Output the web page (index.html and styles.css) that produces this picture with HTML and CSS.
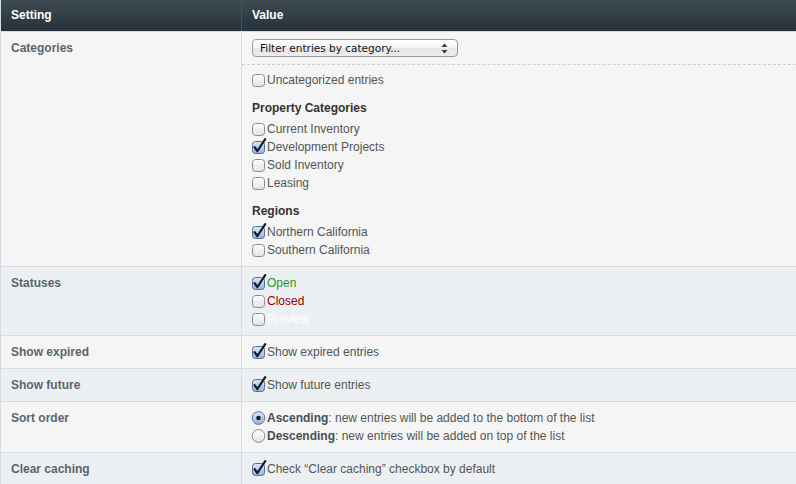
FILE: index.html
```html
<!DOCTYPE html>
<html lang="en">
<head>
  <meta charset="UTF-8" />
  <title>Entry list settings</title>
  <link rel="stylesheet" href="styles.css">
</head>
<body>

  <svg class="defs" width="0" height="0">
    <defs>
      <linearGradient id="g-off" x1="0" y1="0" x2="0" y2="1">
        <stop offset="0" stop-color="#ffffff"/>
        <stop offset="1" stop-color="#e2e2e2"/>
      </linearGradient>
      <linearGradient id="g-on" x1="0" y1="0" x2="0" y2="1">
        <stop offset="0" stop-color="#dbe8f8"/>
        <stop offset="1" stop-color="#8fb3e2"/>
      </linearGradient>
      <symbol id="cb-off" viewBox="0 0 15 18">
        <rect x="0.5" y="3.5" width="12" height="12" rx="3" fill="url(#g-off)" stroke="#8c8c8c"/>
      </symbol>
      <symbol id="cb-on" viewBox="0 0 15 18">
        <rect x="0.5" y="3.5" width="12" height="12" rx="3" fill="url(#g-on)" stroke="#5a6f8c"/>
        <path d="M2.6 9.2 L5.4 13 L13.2 1.2" fill="none" stroke="#111a2b" stroke-width="2.2" stroke-linecap="round" stroke-linejoin="round"/>
      </symbol>
      <symbol id="rd-on" viewBox="0 0 15 18">
        <circle cx="7" cy="9" r="6.4" fill="url(#g-on)" stroke="#6b7a8e"/>
        <circle cx="7" cy="9" r="2.3" fill="#1a1f2a"/>
      </symbol>
      <symbol id="rd-off" viewBox="0 0 15 18">
        <circle cx="7" cy="9" r="6.4" fill="url(#g-off)" stroke="#8c8c8c"/>
      </symbol>
    </defs>
  </svg>

  <div class="settings">

    <div class="row head">
      <div class="cell">Setting</div>
      <div class="cell value">Value</div>
    </div>

    <div class="row">
      <div class="cell label">Categories</div>
      <div class="cell value flush">
        <div class="filter">
          <div class="select">
            <span>Filter entries by category...</span>
            <svg width="7" height="11" viewBox="0 0 7 11"><path d="M3.5 0.5 L6.5 4 L0.5 4 Z M0.5 7 L6.5 7 L3.5 10.5 Z" fill="#3a3a3a"/></svg>
          </div>
        </div>
        <div class="cats">
          <label class="opt"><svg class="box"><use href="#cb-off"/></svg>Uncategorized entries</label>

          <h4>Property Categories</h4>
          <label class="opt"><svg class="box"><use href="#cb-off"/></svg>Current Inventory</label>
          <label class="opt"><svg class="box"><use href="#cb-on"/></svg>Development Projects</label>
          <label class="opt"><svg class="box"><use href="#cb-off"/></svg>Sold Inventory</label>
          <label class="opt"><svg class="box"><use href="#cb-off"/></svg>Leasing</label>

          <h4>Regions</h4>
          <label class="opt"><svg class="box"><use href="#cb-on"/></svg>Northern California</label>
          <label class="opt"><svg class="box"><use href="#cb-off"/></svg>Southern California</label>
        </div>
      </div>
    </div>

    <div class="row alt">
      <div class="cell label">Statuses</div>
      <div class="cell value">
        <label class="opt open"><svg class="box"><use href="#cb-on"/></svg>Open</label>
        <label class="opt closed"><svg class="box"><use href="#cb-off"/></svg>Closed</label>
        <label class="opt preview"><svg class="box"><use href="#cb-off"/></svg>Preview</label>
      </div>
    </div>

    <div class="row">
      <div class="cell label">Show expired</div>
      <div class="cell value">
        <label class="opt"><svg class="box"><use href="#cb-on"/></svg>Show expired entries</label>
      </div>
    </div>

    <div class="row alt">
      <div class="cell label">Show future</div>
      <div class="cell value">
        <label class="opt"><svg class="box"><use href="#cb-on"/></svg>Show future entries</label>
      </div>
    </div>

    <div class="row">
      <div class="cell label">Sort order</div>
      <div class="cell value">
        <label class="opt"><svg class="box radio"><use href="#rd-on"/></svg><b>Ascending</b>: new entries will be added to the bottom of the list</label>
        <label class="opt"><svg class="box radio"><use href="#rd-off"/></svg><b>Descending</b>: new entries will be added on top of the list</label>
      </div>
    </div>

    <div class="row alt">
      <div class="cell label">Clear caching</div>
      <div class="cell value">
        <label class="opt"><svg class="box"><use href="#cb-on"/></svg>Check “Clear caching” checkbox by default</label>
      </div>
    </div>

  </div>

</body>
</html>
```

FILE: styles.css
```css
body {
  margin: 0;
  font-family: "Liberation Sans", Arial, sans-serif;
  font-size: 12px;
  color: #555;
  background: #f4f5f4;
}

.defs {
  position: absolute;
}

.settings {
  border-left: 1px solid #d5dbe0;
}

.row {
  display: grid;
  grid-template-columns: 240px 1fr;
  background: #f4f5f4;
  border-top: 1px solid #d6dce1;
}

.row.alt {
  background: #edf0f2;
}

.row.head {
  height: 31px;
  border-top: none;
  background: linear-gradient(#3e4b53, #27323a);
  color: #fff;
  font-weight: bold;
}

.head .cell {
  padding: 0 10px;
  line-height: 30px;
}

.head .value {
  border-left: 1px solid #46535b;
}

.cell {
  padding: 7px 10px;
  line-height: 18px;
}

.label {
  font-weight: bold;
  color: #5b656d;
}

.value {
  border-left: 1px solid #d6dce1;
}

.value.flush {
  padding: 0;
}

.filter {
  padding: 7px 10px 7px;
  border-bottom: 1px dashed #cfcfcf;
}

.select {
  box-sizing: border-box;
  width: 206px;
  height: 18px;
  padding: 0 9px 0 7px;
  border: 1px solid #9a9a9a;
  border-radius: 4px;
  background: linear-gradient(#ffffff, #f4f4f4 50%, #e6e6e6 51%, #ededed);
  display: flex;
  align-items: center;
  justify-content: space-between;
  font-family: "DejaVu Sans", sans-serif;
  font-size: 10.5px;
  color: #111;
}

.cats {
  padding: 6px 10px 7px;
}

.cats h4 {
  margin: 10px 0 3px;
  font-size: 12px;
  line-height: 18px;
  color: #333;
}

.opt {
  display: flex;
  align-items: center;
  height: 18px;
}

.box {
  width: 15px;
  height: 18px;
  overflow: visible;
  flex: none;
}

.box.radio {
  margin-left: -1px;
  width: 16px;
}

.opt b {
  color: #4a4f55;
}

.open {
  color: #1e9b1e;
}

.closed {
  color: #990000;
}

.preview {
  color: #fff;
}
```
